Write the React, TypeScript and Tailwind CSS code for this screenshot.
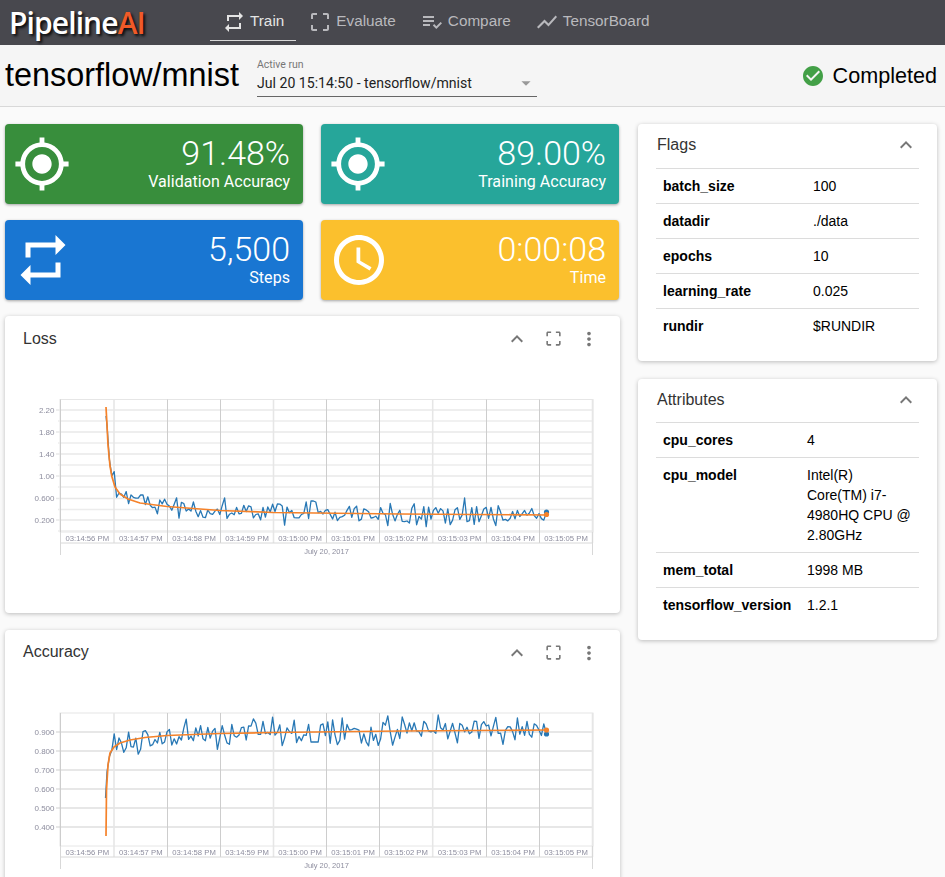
import React from "react";
import {
  MdRepeat, MdCropFree, MdPlaylistAddCheck, MdShowChart, MdGpsFixed, MdAccessTime,
  MdCheckCircle, MdExpandLess, MdMoreVert, MdArrowDropDown,
} from "react-icons/md";

function rng(seed: number) {
  return () => {
    seed |= 0; seed = (seed + 0x6d2b79f5) | 0;
    let t = Math.imul(seed ^ (seed >>> 15), 1 | seed);
    t = (t + Math.imul(t ^ (t >>> 7), 61 | t)) ^ t;
    return ((t ^ (t >>> 14)) >>> 0) / 4294967296;
  };
}
type P = [number, number];
const interp = (pts: P[], x: number) => {
  for (let i = 1; i < pts.length; i++) {
    if (x <= pts[i][0]) {
      const [a, b] = pts[i - 1]; const [c, d] = pts[i];
      return b + ((d - b) * (x - a)) / (c - a);
    }
  }
  return pts[pts.length - 1][1];
};
const path = (pts: P[]) => pts.map((p) => p[0].toFixed(1) + "," + p[1].toFixed(1)).join(" ");

const lossOrange: P[] = [[106, 407], [107, 425], [108, 445], [110, 466], [112, 477], [115, 487], [120, 494], [128, 499], [140, 503], [167, 506.5], [220, 510.5], [273, 512.5], [400, 514], [547, 515]];
const accOrange: P[] = [[106, 836], [106.5, 790], [108, 765], [110, 753], [114, 747], [120, 743], [130, 740], [145, 737.5], [167, 735.5], [220, 733.5], [273, 732.5], [400, 731], [547, 730]];

function series(orange: P[], seed: number, up: number, down: number, start: number, endY: number, overrides: P[]) {
  const r = rng(seed);
  const out: P[] = [[start, interp(orange, 106.5)]];
  for (let x = 107; x < 544; x += 2.4) {
    const base = interp(orange, x);
    const n = x < 112 ? 0 : (r() - 0.5) * (r() < 0.35 ? down : up);
    out.push([x, base + n]);
  }
  out.push([546.5, endY]);
  for (const [ox, oy] of overrides) {
    let bi = 0;
    out.forEach((p, i) => { if (Math.abs(p[0] - ox) < Math.abs(out[bi][0] - ox)) bi = i; });
    out[bi] = [out[bi][0], oy];
  }
  return out;
}

const vx = [60.5, 114, 167.5, 220.5, 273.5, 326.5, 379.5, 432.7, 486.5, 539.5, 592.5];
const times = ["03:14:56 PM", "03:14:57 PM", "03:14:58 PM", "03:14:59 PM", "03:15:00 PM", "03:15:01 PM", "03:15:02 PM", "03:15:03 PM", "03:15:04 PM", "03:15:05 PM"];

function Chart({ top, plotTop, plotBottom, ticks, minor, orange, blue, endO, endB, grid, gridW }: {
  top: number; plotTop: number; plotBottom: number; ticks: [string, number][]; minor: number[];
  orange: P[]; blue: P[]; endO: number; endB: number; grid: string; gridW: number;
}) {
  return (
    <svg viewBox={`5 ${top} 615 252`} className="block w-[615px] h-[252px] blur-[0.35px]">
      <rect x="60" y={plotTop} width="533" height={plotBottom - plotTop} fill="#fff" stroke="#e6e6e6" />
      {minor.map((y) => <line key={y} x1="58" x2="592" y1={y} y2={y} stroke="#ececec" strokeWidth="1.6" />)}
      {ticks.map(([t, y]) => (
        <g key={t}>
          <line x1="56" x2="592" y1={y} y2={y} stroke={grid} strokeWidth={gridW} />
          <text x="54.5" y={y + 2.8} textAnchor="end" fontSize="8" fill="#8d8d9e" fontFamily="Liberation Sans, sans-serif">{t}</text>
        </g>
      ))}
      {vx.map((x, i) => (
        <line key={x} x1={x} x2={x} y1={plotTop} y2={plotBottom + 11} stroke={i % 3 === 1 ? "#e6e6e6" : "#cdcdcd"} strokeWidth={i % 3 === 1 ? 1.6 : 1} />
      ))}
      <line x1="60.5" x2="60.5" y1={plotBottom} y2={plotBottom + 23} stroke="#d8d8d8" />
      <line x1="592.5" x2="592.5" y1={plotBottom} y2={plotBottom + 23} stroke="#d8d8d8" />
      <line x1="60" x2="593" y1={plotBottom + 11} y2={plotBottom + 11} stroke="#d8d8d8" />
      {times.map((t, i) => (
        <text key={t} x={(vx[i] + vx[i + 1]) / 2} y={plotBottom + 9} textAnchor="middle" fontSize="7.7" fill="#8d8d9e" fontFamily="Liberation Sans, sans-serif">{t}</text>
      ))}
      <text x="326.5" y={plotBottom + 22} textAnchor="middle" fontSize="7.5" fill="#8d8d9e" fontFamily="Liberation Sans, sans-serif">July 20, 2017</text>
      <polyline points={path(blue)} fill="none" stroke="#2878b5" strokeWidth="1.3" strokeLinejoin="round" />
      <polyline points={path(orange)} fill="none" stroke="#f5822a" strokeWidth="1.7" strokeLinejoin="round" />
      <circle cx="546.5" cy={endB} r="2.6" fill="#2878b5" />
      <circle cx="546.5" cy={endO} r="2.6" fill="#f5822a" />
    </svg>
  );
}

function Stat({ color, icon, value, label }: { color: string; icon: React.ReactNode; value: string; label: string }) {
  return (
    <div className={`${color} h-20 w-[298px] rounded-sm shadow-[0_1px_3px_rgba(0,0,0,0.35)] flex items-center justify-between pl-2 pr-[13px] text-white`}>
      {icon}
      <div className="text-right font-['Roboto',sans-serif] -mt-[3px]">
        <div className="text-[34px] leading-[38px] font-light">{value}</div>
        <div className="text-[16px] leading-[20px] tracking-[0.05px]">{label}</div>
      </div>
    </div>
  );
}

function Row({ k, v, w }: { k: string; v: React.ReactNode; w: string }) {
  return (
    <div className="flex border-t border-[#dcdcdc] text-[14px] leading-5 py-[7px] pl-[7px] text-black">
      <div className={`${w} shrink-0 font-bold`}>{k}</div>
      <div className="flex-1">{v}</div>
    </div>
  );
}

function Side({ title, children, head }: { title: string; children: React.ReactNode; head: string }) {
  return (
    <div className="bg-white shadow-[0_1px_4px_rgba(0,0,0,0.25)] rounded-sm px-[18px] pb-[18px]">
      <div className={`${head} flex items-center justify-between text-[16px] text-[#333] pl-[1px] pr-[1px] pb-[2px]`}>
        <span>{title}</span>
        <MdExpandLess size={24} className="text-[#777]" />
      </div>
      {children}
    </div>
  );
}

function ChartCard({ title, children, titlePad }: { title: string; children: React.ReactNode; titlePad: string }) {
  return (
    <div className="bg-white shadow-[0_1px_4px_rgba(0,0,0,0.25)] rounded-sm w-[615px] h-[297px] shrink-0">
      <div className="h-[45px] flex items-center pl-[18px] pr-[13px] text-[16px] text-[#333]">
        <span className={`flex-1 ${titlePad}`}>{title}</span>
        <div className="w-9 flex justify-center"><MdExpandLess size={24} className="text-[#777]" /></div>
        <div className="w-9 flex justify-center"><MdCropFree size={19} className="text-[#777]" /></div>
        <div className="w-9 flex justify-center"><MdMoreVert size={22} className="text-[#777]" /></div>
      </div>
      {children}
    </div>
  );
}

function Nav({ icon, label, active }: { icon: React.ReactNode; label: string; active?: boolean }) {
  return (
    <div className={`h-[41px] flex items-center gap-1 px-3 pt-[3px] border-b ${active ? "border-[#d8d8d8] text-[#e4e4e4]" : "border-transparent text-[#b9b9bd]"}`}>
      {icon}
      <span className="text-[15.3px]">{label}</span>
    </div>
  );
}

export default function App() {
  const lossBlue = series(lossOrange, 7, 17, 26, 106, 512, [[143, 495], [310, 501], [313, 501], [316, 502], [465, 498], [494, 519]]);
  const accBlue = series(accOrange, 23, 20, 32, 105.5, 734, [[401, 717], [310, 742], [315, 742], [318, 742]]);
  accBlue[0] = [105.5, 798];
  accBlue[1] = [107, 772];
  return (
    <div className="w-[945px] h-[877px] overflow-hidden bg-[#fafafa] font-['Liberation_Sans',Arial,sans-serif]">
      <header className="h-[45px] bg-[#48484e] flex items-start">
        <div className="w-[210px] pl-[9px] h-[45px] flex items-center text-[30px] font-semibold font-['Open_Sans',sans-serif] tracking-[-0.9px] [text-shadow:2px_2px_3px_rgba(0,0,0,0.9)]">
          <span className="text-white">Pipeline</span><span className="text-[#f05a28]">AI</span>
        </div>
        <Nav active icon={<MdRepeat size={24} />} label="Train" />
        <Nav icon={<MdCropFree size={24} />} label="Evaluate" />
        <Nav icon={<MdPlaylistAddCheck size={24} />} label="Compare" />
        <Nav icon={<MdShowChart size={24} />} label="TensorBoard" />
      </header>
      <div className="h-[62px] bg-[#f5f5f5] border-b border-[#d8d8d8] flex items-center pl-[5px] pr-2">
        <div className="text-[32.4px] text-black w-[252px] whitespace-nowrap">tensorflow/mnist</div>
        <div className="w-[280px] border-b border-[#666] h-[38px] mt-[5px]">
          <div className="text-[10.5px] leading-3 text-[#777] font-['Roboto',sans-serif]">Active run</div>
          <div className="flex items-center justify-between text-[14.1px] leading-6 text-[#222] font-['Roboto',sans-serif]">
            <span>Jul 20 15:14:50 - tensorflow/mnist</span>
            <MdArrowDropDown size={22} className="text-[#999]" />
          </div>
        </div>
        <div className="flex-1 flex items-center justify-end gap-[8px] pt-[2px]">
          <MdCheckCircle size={24} className="text-[#43a047]" />
          <span className="text-[21.6px] text-black">Completed</span>
        </div>
      </div>
      <main className="flex pt-[17px] pl-[5px]">
        <div className="w-[633px] shrink-0 flex flex-col">
          <div className="grid grid-cols-[298px_298px] gap-x-[18px] gap-y-4">
            <Stat color="bg-[#388e3c]" icon={<MdGpsFixed size={58} />} value="91.48%" label="Validation Accuracy" />
            <Stat color="bg-[#26a69a]" icon={<MdGpsFixed size={58} />} value="89.00%" label="Training Accuracy" />
            <Stat color="bg-[#1976d2]" icon={<MdRepeat size={60} />} value="5,500" label="Steps" />
            <Stat color="bg-[#fbc02d]" icon={<MdAccessTime size={60} />} value="0:00:08" label="Time" />
          </div>
          <div className="flex flex-col gap-[17px] mt-4">
            <ChartCard title="Loss" titlePad="">
              <Chart top={361} plotTop={399.5} plotBottom={532} grid="#e8e8e8" gridW={1.6}
                ticks={[["2.20", 410], ["1.80", 432], ["1.40", 454], ["1.00", 476], ["0.600", 498.5], ["0.200", 520]]}
                minor={[421, 443, 465, 487, 509.5, 531]}
                orange={lossOrange} blue={lossBlue} endO={514.5} endB={512} />
            </ChartCard>
            <ChartCard title="Accuracy" titlePad="pb-[2px]">
              <Chart top={675} plotTop={713} plotBottom={846} grid="#cfcfcf" gridW={1}
                ticks={[["0.900", 732], ["0.800", 751], ["0.700", 770], ["0.600", 789], ["0.500", 808], ["0.400", 827]]}
                minor={[]}
                orange={accOrange} blue={accBlue} endO={730} endB={734} />
            </ChartCard>
          </div>
        </div>
        <div className="w-[299px] shrink-0 flex flex-col gap-[18px]">
          <Side title="Flags" head="h-11">
            <Row w="w-[150px]" k="batch_size" v="100" />
            <Row w="w-[150px]" k="datadir" v="./data" />
            <Row w="w-[150px]" k="epochs" v="10" />
            <Row w="w-[150px]" k="learning_rate" v="0.025" />
            <Row w="w-[150px]" k="rundir" v="$RUNDIR" />
          </Side>
          <Side title="Attributes" head="h-[43px]">
            <Row w="w-[144px]" k="cpu_cores" v="4" />
            <Row w="w-[144px]" k="cpu_model" v={<>Intel(R)<br />Core(TM) i7-<br />4980HQ CPU @<br />2.80GHz</>} />
            <Row w="w-[144px]" k="mem_total" v="1998 MB" />
            <Row w="w-[144px]" k="tensorflow_version" v="1.2.1" />
          </Side>
        </div>
      </main>
    </div>
  );
}
